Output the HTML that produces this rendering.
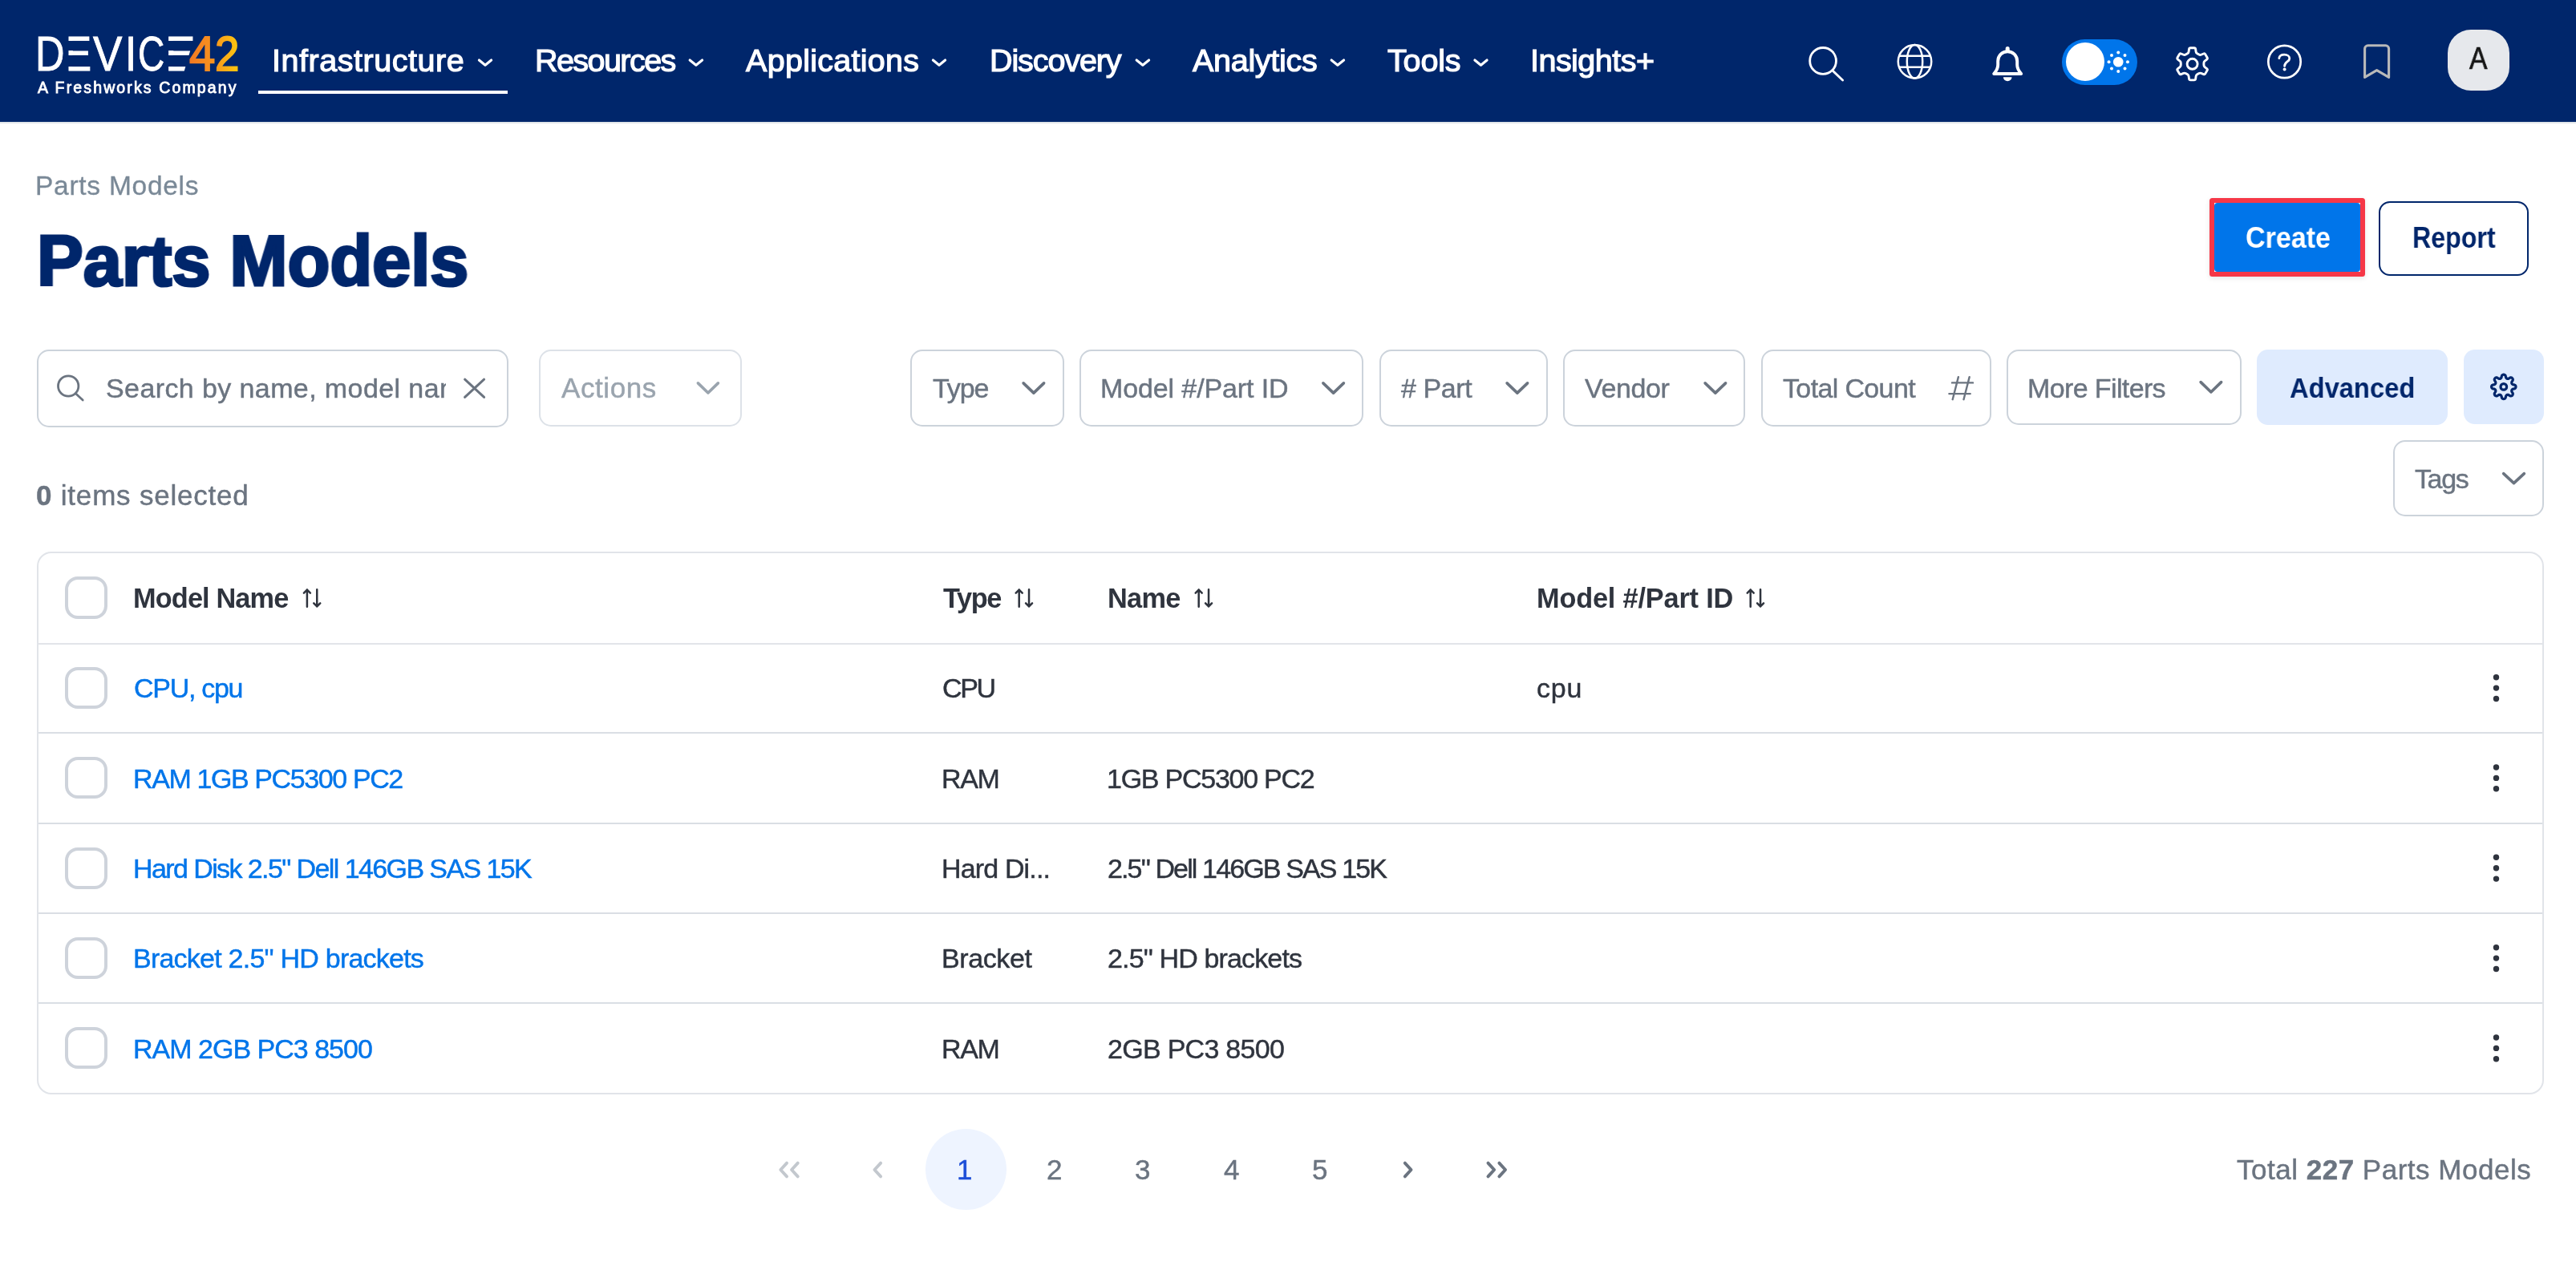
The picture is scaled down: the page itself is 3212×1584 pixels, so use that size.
<!DOCTYPE html>
<html lang="en"><head><meta charset="utf-8"><title>Parts Models</title>
<style>
*{margin:0;padding:0;box-sizing:border-box}
html,body{width:3212px;height:1584px;overflow:hidden;background:#fff}
body{font-family:"Liberation Sans", Arial, sans-serif;position:relative;-webkit-font-smoothing:antialiased}
.t{position:absolute;white-space:nowrap;display:block;will-change:transform}
.t b{font-weight:700}
.a{position:absolute}
.lg{display:inline-block;width:0;color:#fff;transform-origin:0 0;font-weight:400;-webkit-text-stroke:0.9px #fff}.lg.g{width:auto;position:relative;z-index:2;color:transparent;-webkit-background-clip:text;background-clip:text;-webkit-text-stroke:1.9px transparent}.lg.g4{background-image:linear-gradient(90deg,#f37a22 0%,#f37a22 5%,#f7931f 95%)}.lg.g2{background-image:linear-gradient(90deg,#f79a1c 8%,#fdc50f 90%)}</style></head>
<body>
<main>
<header class="site-header">
<div class="a" style="left:0px;top:0px;width:3212px;height:152px;background:#00266b;border-radius:0px;"></div>
<div class="a" style="left:0px;top:152px;width:3212px;height:2px;background:#e1e5ea;border-radius:0px;"></div>
<div class="a" style="left:322px;top:113px;width:311px;height:4px;background:#fff;border-radius:0px;"></div>
<div class="a" style="left:2571px;top:49px;width:93.75px;height:57px;background:#0075ea;border-radius:28.5px;"></div>
<div class="a" style="left:2576px;top:53px;width:48.2px;height:48.2px;background:#fff;border-radius:24.1px;"></div>
<div class="a" style="left:3052px;top:36.8px;width:77px;height:76px;background:#e6e8ec;border-radius:29px;"></div>
<svg class="a" style="left:0;top:0" width="3212" height="1584" viewBox="0 0 3212 1584" aria-hidden="true">
<path d="M597.39 74.99L605.00 81.26L612.61 74.99" fill="none" stroke="#fff" stroke-width="3.1" stroke-linecap="round" stroke-linejoin="round"/>
<path d="M860.14 74.99L867.88 81.26L875.61 74.99" fill="none" stroke="#fff" stroke-width="3.1" stroke-linecap="round" stroke-linejoin="round"/>
<path d="M1163.39 74.99L1171.00 81.26L1178.61 74.99" fill="none" stroke="#fff" stroke-width="3.1" stroke-linecap="round" stroke-linejoin="round"/>
<path d="M1417.14 74.99L1424.88 81.26L1432.61 74.99" fill="none" stroke="#fff" stroke-width="3.1" stroke-linecap="round" stroke-linejoin="round"/>
<path d="M1660.14 74.99L1667.88 81.26L1675.61 74.99" fill="none" stroke="#fff" stroke-width="3.1" stroke-linecap="round" stroke-linejoin="round"/>
<path d="M1838.89 74.99L1846.50 81.26L1854.11 74.99" fill="none" stroke="#fff" stroke-width="3.1" stroke-linecap="round" stroke-linejoin="round"/>
<circle cx="2273.1" cy="75.9" r="16.4" fill="none" stroke="#fff" stroke-width="2.8"/>
<path d="M2285 88.1L2297.6 100.1" stroke="#fff" stroke-width="2.8" stroke-linecap="round"/>
<g fill="none" stroke="#fff" stroke-width="2.5"><circle cx="2387.5" cy="76.75" r="20.75"/><ellipse cx="2387.5" cy="76.75" rx="9.7" ry="20.75"/><path d="M2367.9 69.85H2407.1M2367.9 83.65H2407.1"/></g>
<path d="M2486.2 92C2489.7 88 2491.2 85 2491.2 81V76.3C2491.2 69.5 2496.5 64.25 2503.2 64.25C2509.8999999999996 64.25 2515.2 69.5 2515.2 76.3V81C2515.2 85 2516.7 88 2520.2 92Z" fill="none" stroke="#fff" stroke-width="3.9" stroke-linejoin="round"/>
<path d="M2503.2 60.6V63" stroke="#fff" stroke-width="5" stroke-linecap="round"/>
<path d="M2497.9 96.3a5.3 5 0 0 0 10.6 0z" fill="#fff"/>
<circle cx="2641.25" cy="77.3" r="6.3" fill="#fff"/>
<circle cx="2652.95" cy="77.30" r="2" fill="#fff"/>
<circle cx="2649.52" cy="85.57" r="2" fill="#fff"/>
<circle cx="2641.25" cy="89.00" r="2" fill="#fff"/>
<circle cx="2632.98" cy="85.57" r="2" fill="#fff"/>
<circle cx="2629.55" cy="77.30" r="2" fill="#fff"/>
<circle cx="2632.98" cy="69.03" r="2" fill="#fff"/>
<circle cx="2641.25" cy="65.60" r="2" fill="#fff"/>
<circle cx="2649.52" cy="69.03" r="2" fill="#fff"/>
<path d="M2739.63 66.74Q2738.33 65.99 2738.12 64.50L2737.66 61.25Q2737.45 59.77 2735.95 59.77L2731.25 59.77Q2729.75 59.77 2729.54 61.25L2729.08 64.50Q2728.87 65.99 2727.57 66.74L2725.30 68.05Q2724.00 68.80 2722.61 68.24L2719.57 67.01Q2718.18 66.45 2717.43 67.75L2715.07 71.82Q2714.32 73.12 2715.51 74.04L2718.09 76.07Q2719.27 76.99 2719.27 78.49L2719.27 81.11Q2719.27 82.61 2718.09 83.53L2715.51 85.56Q2714.32 86.48 2715.07 87.78L2717.43 91.85Q2718.18 93.15 2719.57 92.59L2722.61 91.36Q2724.00 90.80 2725.30 91.55L2727.57 92.86Q2728.87 93.61 2729.08 95.10L2729.54 98.35Q2729.75 99.83 2731.25 99.83L2735.95 99.83Q2737.45 99.83 2737.66 98.35L2738.12 95.10Q2738.33 93.61 2739.63 92.86L2741.90 91.55Q2743.20 90.80 2744.59 91.36L2747.63 92.59Q2749.02 93.15 2749.77 91.85L2752.13 87.78Q2752.88 86.48 2751.69 85.56L2749.11 83.53Q2747.93 82.61 2747.93 81.11L2747.93 78.49Q2747.93 76.99 2749.11 76.07L2751.69 74.04Q2752.88 73.12 2752.13 71.82L2749.77 67.75Q2749.02 66.45 2747.63 67.01L2744.59 68.24Q2743.20 68.80 2741.90 68.05Z" fill="none" stroke="#fff" stroke-width="2.9" stroke-linejoin="round"/><circle cx="2733.60" cy="79.80" r="6.50" fill="none" stroke="#fff" stroke-width="2.9"/>
<circle cx="2848.5" cy="77" r="20.2" fill="none" stroke="#fff" stroke-width="2.7"/>
<path d="M2841.8 72.6C2842.2 69.6 2844.9 68.2 2848.3 68.2C2852.2 68.2 2854.8 70.2 2854.8 72.9C2854.8 76.9 2848.6 77.2 2848.6 82.4" fill="none" stroke="#fff" stroke-width="2.8" stroke-linecap="round" stroke-linejoin="round"/>
<circle cx="2848.6" cy="86.4" r="2.0" fill="#fff"/>
<path d="M2948.6 96.4V60.8a4 4 0 0 1 4-4h22a4 4 0 0 1 4 4V96.4L2963.6 87.6Z" fill="none" stroke="#b9b9b9" stroke-width="3.1" stroke-linejoin="round"/>
</svg>
<i class="a" style="z-index:1;left:83.5px;top:50.98px;width:7.5px;height:12.44px;background:#00266b"></i><i class="a" style="z-index:1;left:83.5px;top:68.9px;width:7.5px;height:14.12px;background:#00266b"></i><i class="a" style="z-index:1;left:208.5px;top:50.98px;width:9.5px;height:12.44px;background:#00266b"></i><i class="a" style="z-index:1;left:208.5px;top:68.9px;width:9.5px;height:14.12px;background:#00266b"></i><svg class="a" style="z-index:1;left:0;top:0" width="400" height="152" aria-hidden="true"><path d="M242.6 45L229.6 89H246V45Z" fill="#00266b"/></svg><div class="a" id="logo" aria-label="DEVICE42" style="left:0;top:0;padding-top:35.76px;font-size:61.7px;line-height:61.7px;white-space:nowrap"><span class="lg" style="margin-left:43.55px;transform:scaleX(0.8196)">D</span><span class="lg" style="margin-left:37.96px;transform:scaleX(0.7775)">E</span><span class="lg" style="margin-left:34.95px;transform:scaleX(0.8852)">V</span><span class="lg" style="margin-left:39.24px;transform:scaleX(0.8342)">I</span><span class="lg" style="margin-left:16.82px;transform:scaleX(0.7447)">C</span><span class="lg" style="margin-left:33.32px;transform:scaleX(0.9121)">E</span><span class="lg g g4" style="margin-left:30.63px;transform:scaleX(0.9424)">4</span><span class="lg g g2" style="margin-left:-2.43px;transform:scaleX(0.8858)">2</span></div>
<span class="t" id="nav0" style="left:339.46px;top:56.31px;font-size:39.5px;line-height:39.5px;font-weight:400;color:#fff;letter-spacing:0.538px;-webkit-text-stroke:1.2px #fff;">Infrastructure</span>
<span class="t" id="nav1" style="left:666.61px;top:56.31px;font-size:39.5px;line-height:39.5px;font-weight:400;color:#fff;letter-spacing:-1.564px;-webkit-text-stroke:1.2px #fff;">Resources</span>
<span class="t" id="nav2" style="left:930.40px;top:56.31px;font-size:39.5px;line-height:39.5px;font-weight:400;color:#fff;letter-spacing:0.282px;-webkit-text-stroke:1.2px #fff;">Applications</span>
<span class="t" id="nav3" style="left:1233.61px;top:56.31px;font-size:39.5px;line-height:39.5px;font-weight:400;color:#fff;letter-spacing:-1.096px;-webkit-text-stroke:1.2px #fff;">Discovery</span>
<span class="t" id="nav4" style="left:1487.40px;top:56.31px;font-size:39.5px;line-height:39.5px;font-weight:400;color:#fff;letter-spacing:-0.300px;-webkit-text-stroke:1.2px #fff;">Analytics</span>
<span class="t" id="nav5" style="left:1729.73px;top:56.31px;font-size:39.5px;line-height:39.5px;font-weight:400;color:#fff;letter-spacing:-0.150px;-webkit-text-stroke:1.2px #fff;">Tools</span>
<span class="t" id="nav6" style="left:1908.21px;top:56.31px;font-size:39.5px;line-height:39.5px;font-weight:400;color:#fff;letter-spacing:-0.524px;-webkit-text-stroke:1.2px #fff;">Insights+</span>
<span class="t" id="fw" style="left:47.47px;top:99.99px;font-size:19.5px;line-height:19.5px;font-weight:400;color:#fff;letter-spacing:2.135px;-webkit-text-stroke:0.8px #fff;">A Freshworks Company</span>
<span class="t" id="avatar" style="left:3078.95px;top:54.30px;font-size:38.5px;line-height:38.5px;font-weight:400;color:#161616;letter-spacing:0.000px;-webkit-text-stroke:0.7px #161616;transform-origin:0 0;transform:scaleX(0.8717);">A</span>
</header>
<section class="page-head">
<div class="a" style="left:2755px;top:247px;width:194px;height:98px;border:6px solid #f63747;border-radius:3.5px;background:#fff;box-shadow:0 2px 6px rgba(0,0,0,.10);"></div>
<div class="a" style="left:2761px;top:253px;width:182px;height:86px;background:#0075ea;border-radius:4px;"></div>
<div class="a" style="left:2966px;top:251px;width:187px;height:93px;border:2.4px solid #00266b;border-radius:14px;background:#fff;"></div>


<span class="t" id="crumb" style="left:44.49px;top:214.89px;font-size:33.5px;line-height:33.5px;font-weight:400;color:#7a8997;letter-spacing:0.732px;-webkit-text-stroke:0.3px #7a8997;">Parts Models</span>
<span class="t" id="title" style="left:46.26px;top:282.37px;font-size:88.5px;line-height:88.5px;font-weight:700;color:#00266b;letter-spacing:0.000px;-webkit-text-stroke:3.2px #00266b;transform-origin:0 0;transform:scaleX(0.9774);">Parts Models</span>
<span class="t" id="create" style="left:2799.56px;top:279.12px;font-size:36px;line-height:36px;font-weight:700;color:#fff;letter-spacing:0.000px;transform-origin:0 0;transform:scaleX(0.9461);">Create</span>
<span class="t" id="report" style="left:3007.84px;top:279.12px;font-size:36px;line-height:36px;font-weight:700;color:#00266b;letter-spacing:0.000px;transform-origin:0 0;transform:scaleX(0.8929);">Report</span>
</section>
<section class="toolbar">
<div class="a" style="left:46px;top:436px;width:588px;height:97px;border:2px solid #ccd3db;border-radius:15px;background:#fff;"></div>
<div class="a" style="left:672px;top:436px;width:253px;height:96px;border:2px solid #dde2e8;border-radius:15px;background:#fff;"></div>
<div class="a" style="left:1135px;top:436px;width:192px;height:96px;border:2px solid #ccd3db;border-radius:15px;background:#fff;"></div>
<div class="a" style="left:1346px;top:436px;width:354px;height:96px;border:2px solid #ccd3db;border-radius:15px;background:#fff;"></div>
<div class="a" style="left:1720px;top:436px;width:210px;height:96px;border:2px solid #ccd3db;border-radius:15px;background:#fff;"></div>
<div class="a" style="left:1949px;top:436px;width:227px;height:96px;border:2px solid #ccd3db;border-radius:15px;background:#fff;"></div>
<div class="a" style="left:2196px;top:436px;width:287px;height:96px;border:2px solid #ccd3db;border-radius:15px;background:#fff;"></div>
<div class="a" style="left:2502px;top:436px;width:293px;height:94px;border:2px solid #ccd3db;border-radius:15px;background:#fff;"></div>
<div class="a" style="left:2814px;top:436px;width:238px;height:94px;background:#dfebfe;border-radius:14px;"></div>
<div class="a" style="left:3072px;top:436px;width:100px;height:93px;background:#dfebfe;border-radius:14px;"></div>
<div class="a" style="left:2984px;top:549px;width:188px;height:95px;border:2px solid #ccd3db;border-radius:15px;background:#fff;"></div>
<svg class="a" style="left:0;top:0" width="3212" height="1584" viewBox="0 0 3212 1584" aria-hidden="true">
<circle cx="85.2" cy="481.5" r="12.7" fill="none" stroke="#6b7480" stroke-width="2.8"/>
<path d="M94.6 491L103.2 499" stroke="#6b7480" stroke-width="2.8" stroke-linecap="round"/>
<path d="M579.6 473.2L603.6 495.4M603.6 473.2L579.6 495.4" stroke="#6b7480" stroke-width="3" stroke-linecap="round"/>
<path d="M870.37 477.87L882.88 489.95L895.38 477.87" fill="none" stroke="#9aa4ae" stroke-width="3.6" stroke-linecap="round" stroke-linejoin="round"/>
<path d="M1276.12 477.87L1288.88 490.15L1301.63 477.87" fill="none" stroke="#6b7480" stroke-width="3.6" stroke-linecap="round" stroke-linejoin="round"/>
<path d="M1649.87 477.87L1662.62 490.15L1675.38 477.87" fill="none" stroke="#6b7480" stroke-width="3.6" stroke-linecap="round" stroke-linejoin="round"/>
<path d="M1879.12 477.87L1891.88 490.15L1904.63 477.87" fill="none" stroke="#6b7480" stroke-width="3.6" stroke-linecap="round" stroke-linejoin="round"/>
<path d="M2126.12 477.87L2138.88 490.15L2151.63 477.87" fill="none" stroke="#6b7480" stroke-width="3.6" stroke-linecap="round" stroke-linejoin="round"/>
<path d="M2744.12 476.62L2756.88 488.95L2769.63 476.62" fill="none" stroke="#6b7480" stroke-width="3.6" stroke-linecap="round" stroke-linejoin="round"/>
<path d="M2441.9 470.1L2434.7 498.2M2455.7 470.1L2448.5 498.2M2434 477.4H2460M2430.4 491.1H2456.7" fill="none" stroke="#6b7480" stroke-width="2.4" stroke-linecap="round"/>
<path d="M3121.80 467.20L3122.39 467.27L3122.97 467.48L3123.52 467.84L3124.02 468.39L3124.35 469.58L3124.59 470.77L3124.92 471.35L3125.25 471.77L3125.61 472.08L3125.99 472.29L3126.41 472.41L3126.87 472.44L3127.41 472.38L3128.05 472.21L3129.06 471.53L3130.14 470.92L3130.88 470.89L3131.52 471.02L3132.08 471.28L3132.55 471.65L3132.92 472.12L3133.18 472.68L3133.31 473.32L3133.28 474.06L3132.67 475.14L3131.99 476.15L3131.82 476.79L3131.76 477.33L3131.79 477.79L3131.91 478.21L3132.12 478.59L3132.43 478.95L3132.85 479.28L3133.43 479.61L3134.62 479.85L3135.81 480.18L3136.36 480.68L3136.72 481.23L3136.93 481.81L3137.00 482.40L3136.93 482.99L3136.72 483.57L3136.36 484.12L3135.81 484.62L3134.62 484.95L3133.43 485.19L3132.85 485.52L3132.43 485.85L3132.12 486.21L3131.91 486.59L3131.79 487.01L3131.76 487.47L3131.82 488.01L3131.99 488.65L3132.67 489.66L3133.28 490.74L3133.31 491.48L3133.18 492.12L3132.92 492.68L3132.55 493.15L3132.08 493.52L3131.52 493.78L3130.88 493.91L3130.14 493.88L3129.06 493.27L3128.05 492.59L3127.41 492.42L3126.87 492.36L3126.41 492.39L3125.99 492.51L3125.61 492.72L3125.25 493.03L3124.92 493.45L3124.59 494.03L3124.35 495.22L3124.02 496.41L3123.52 496.96L3122.97 497.32L3122.39 497.53L3121.80 497.60L3121.21 497.53L3120.63 497.32L3120.08 496.96L3119.58 496.41L3119.25 495.22L3119.01 494.03L3118.68 493.45L3118.35 493.03L3117.99 492.72L3117.61 492.51L3117.19 492.39L3116.73 492.36L3116.19 492.42L3115.55 492.59L3114.54 493.27L3113.46 493.88L3112.72 493.91L3112.08 493.78L3111.52 493.52L3111.05 493.15L3110.68 492.68L3110.42 492.12L3110.29 491.48L3110.32 490.74L3110.93 489.66L3111.61 488.65L3111.78 488.01L3111.84 487.47L3111.81 487.01L3111.69 486.59L3111.48 486.21L3111.17 485.85L3110.75 485.52L3110.17 485.19L3108.98 484.95L3107.79 484.62L3107.24 484.12L3106.88 483.57L3106.67 482.99L3106.60 482.40L3106.67 481.81L3106.88 481.23L3107.24 480.68L3107.79 480.18L3108.98 479.85L3110.17 479.61L3110.75 479.28L3111.17 478.95L3111.48 478.59L3111.69 478.21L3111.81 477.79L3111.84 477.33L3111.78 476.79L3111.61 476.15L3110.93 475.14L3110.32 474.06L3110.29 473.32L3110.42 472.68L3110.68 472.12L3111.05 471.65L3111.52 471.28L3112.08 471.02L3112.72 470.89L3113.46 470.92L3114.54 471.53L3115.55 472.21L3116.19 472.38L3116.73 472.44L3117.19 472.41L3117.61 472.29L3117.99 472.08L3118.35 471.77L3118.68 471.35L3119.01 470.77L3119.25 469.58L3119.58 468.39L3120.08 467.84L3120.63 467.48L3121.21 467.27L3121.80 467.20Z" fill="none" stroke="#00266b" stroke-width="3.2" stroke-linejoin="round"/><circle cx="3121.80" cy="482.40" r="3.80" fill="none" stroke="#00266b" stroke-width="3.2"/>
<path d="M3121.62 590.62L3134.50 602.65L3147.38 590.62" fill="none" stroke="#6b7480" stroke-width="3.6" stroke-linecap="round" stroke-linejoin="round"/>
</svg>

<span class="t" id="search" style="left:131.63px;top:467.46px;font-size:34px;line-height:34px;font-weight:400;color:#6b7480;letter-spacing:0.400px;-webkit-text-stroke:0.45px #6b7480;overflow:hidden;height:44.2px;width:423.87px;">Search by name, model name</span>
<span class="t" id="actions" style="left:699.87px;top:466.12px;font-size:35px;line-height:35px;font-weight:400;color:#9aa4ae;letter-spacing:0.575px;-webkit-text-stroke:0.45px #9aa4ae;">Actions</span>
<span class="t" id="ftype" style="left:1162.57px;top:466.71px;font-size:34px;line-height:34px;font-weight:400;color:#6b7480;letter-spacing:-1.065px;-webkit-text-stroke:0.45px #6b7480;">Type</span>
<span class="t" id="fmodel" style="left:1371.79px;top:466.71px;font-size:34px;line-height:34px;font-weight:400;color:#6b7480;letter-spacing:-0.113px;-webkit-text-stroke:0.45px #6b7480;">Model #/Part ID</span>
<span class="t" id="fpart" style="left:1746.91px;top:466.71px;font-size:34px;line-height:34px;font-weight:400;color:#6b7480;letter-spacing:-0.420px;-webkit-text-stroke:0.45px #6b7480;"># Part</span>
<span class="t" id="fvendor" style="left:1976.09px;top:466.71px;font-size:34px;line-height:34px;font-weight:400;color:#6b7480;letter-spacing:-0.385px;-webkit-text-stroke:0.45px #6b7480;">Vendor</span>
<span class="t" id="ftotal" style="left:2222.57px;top:466.71px;font-size:34px;line-height:34px;font-weight:400;color:#6b7480;letter-spacing:-0.640px;-webkit-text-stroke:0.45px #6b7480;">Total Count</span>
<span class="t" id="fmore" style="left:2528.29px;top:466.71px;font-size:34px;line-height:34px;font-weight:400;color:#6b7480;letter-spacing:-0.622px;-webkit-text-stroke:0.45px #6b7480;">More Filters</span>
<span class="t" id="adv" style="left:2855.49px;top:465.57px;font-size:35px;line-height:35px;font-weight:700;color:#00266b;letter-spacing:0.000px;transform-origin:0 0;transform:scaleX(0.9340);">Advanced</span>
<span class="t" id="tags" style="left:3011.07px;top:580.21px;font-size:34px;line-height:34px;font-weight:400;color:#6b7480;letter-spacing:-1.388px;-webkit-text-stroke:0.45px #6b7480;">Tags</span>
<span class="t" id="sel" style="left:45.26px;top:600.37px;font-size:35px;line-height:35px;font-weight:400;color:#6b7480;letter-spacing:0.793px;-webkit-text-stroke:0.45px #6b7480;"><b>0</b> items selected</span>
</section>
<section class="data-table">
<div class="a" style="left:46px;top:688px;width:3126px;height:677px;border:2px solid #e1e4e9;border-radius:18px;background:#fff;"></div>
<div class="a" style="left:48px;top:802px;width:3122px;height:2px;background:#e2e4e9;border-radius:0px;"></div>
<div class="a" style="left:48px;top:913px;width:3122px;height:2px;background:#dadee4;border-radius:0px;"></div>
<div class="a" style="left:48px;top:1026px;width:3122px;height:2px;background:#dadee4;border-radius:0px;"></div>
<div class="a" style="left:48px;top:1138px;width:3122px;height:2px;background:#dadee4;border-radius:0px;"></div>
<div class="a" style="left:48px;top:1250px;width:3122px;height:2px;background:#dadee4;border-radius:0px;"></div>
<div class="a" style="left:81px;top:719px;width:53px;height:53px;border:4px solid #ced3db;border-radius:16px;background:#fff;"></div>
<div class="a" style="left:81px;top:832px;width:53px;height:52px;border:4px solid #ced3db;border-radius:16px;background:#fff;"></div>
<div class="a" style="left:81px;top:944px;width:53px;height:52px;border:4px solid #ced3db;border-radius:16px;background:#fff;"></div>
<div class="a" style="left:81px;top:1057px;width:53px;height:52px;border:4px solid #ced3db;border-radius:16px;background:#fff;"></div>
<div class="a" style="left:81px;top:1169px;width:53px;height:52px;border:4px solid #ced3db;border-radius:16px;background:#fff;"></div>
<div class="a" style="left:81px;top:1281px;width:53px;height:52px;border:4px solid #ced3db;border-radius:16px;background:#fff;"></div>
<svg class="a" style="left:0;top:0" width="3212" height="1584" viewBox="0 0 3212 1584" aria-hidden="true">
<path d="M382.90 756.70V735.50M378.90 739.60L382.90 735.50L386.90 739.60" fill="none" stroke="#2f343e" stroke-width="2.5" stroke-linecap="round" stroke-linejoin="round"/><path d="M395.25 735.20V756.40M391.25 752.30L395.25 756.40L399.25 752.30" fill="none" stroke="#2f343e" stroke-width="2.5" stroke-linecap="round" stroke-linejoin="round"/>
<path d="M1270.70 756.70V735.50M1266.70 739.60L1270.70 735.50L1274.70 739.60" fill="none" stroke="#2f343e" stroke-width="2.5" stroke-linecap="round" stroke-linejoin="round"/><path d="M1283.05 735.20V756.40M1279.05 752.30L1283.05 756.40L1287.05 752.30" fill="none" stroke="#2f343e" stroke-width="2.5" stroke-linecap="round" stroke-linejoin="round"/>
<path d="M1494.70 756.70V735.50M1490.70 739.60L1494.70 735.50L1498.70 739.60" fill="none" stroke="#2f343e" stroke-width="2.5" stroke-linecap="round" stroke-linejoin="round"/><path d="M1507.05 735.20V756.40M1503.05 752.30L1507.05 756.40L1511.05 752.30" fill="none" stroke="#2f343e" stroke-width="2.5" stroke-linecap="round" stroke-linejoin="round"/>
<path d="M2182.70 756.70V735.50M2178.70 739.60L2182.70 735.50L2186.70 739.60" fill="none" stroke="#2f343e" stroke-width="2.5" stroke-linecap="round" stroke-linejoin="round"/><path d="M2195.05 735.20V756.40M2191.05 752.30L2195.05 756.40L2199.05 752.30" fill="none" stroke="#2f343e" stroke-width="2.5" stroke-linecap="round" stroke-linejoin="round"/>
<circle cx="3112.5" cy="844.70" r="3.7" fill="#2f343e"/>
<circle cx="3112.5" cy="858.10" r="3.7" fill="#2f343e"/>
<circle cx="3112.5" cy="871.50" r="3.7" fill="#2f343e"/>
<circle cx="3112.5" cy="957.00" r="3.7" fill="#2f343e"/>
<circle cx="3112.5" cy="970.40" r="3.7" fill="#2f343e"/>
<circle cx="3112.5" cy="983.80" r="3.7" fill="#2f343e"/>
<circle cx="3112.5" cy="1069.30" r="3.7" fill="#2f343e"/>
<circle cx="3112.5" cy="1082.70" r="3.7" fill="#2f343e"/>
<circle cx="3112.5" cy="1096.10" r="3.7" fill="#2f343e"/>
<circle cx="3112.5" cy="1181.70" r="3.7" fill="#2f343e"/>
<circle cx="3112.5" cy="1195.10" r="3.7" fill="#2f343e"/>
<circle cx="3112.5" cy="1208.50" r="3.7" fill="#2f343e"/>
<circle cx="3112.5" cy="1294.00" r="3.7" fill="#2f343e"/>
<circle cx="3112.5" cy="1307.40" r="3.7" fill="#2f343e"/>
<circle cx="3112.5" cy="1320.80" r="3.7" fill="#2f343e"/>
</svg>

<span class="t" id="h0" style="left:166.44px;top:728.96px;font-size:34.3px;line-height:34.3px;font-weight:700;color:#2f343e;letter-spacing:-0.864px;">Model Name</span>
<span class="t" id="h1" style="left:1175.85px;top:728.96px;font-size:34.3px;line-height:34.3px;font-weight:700;color:#2f343e;letter-spacing:-1.401px;">Type</span>
<span class="t" id="h2" style="left:1381.44px;top:728.96px;font-size:34.3px;line-height:34.3px;font-weight:700;color:#2f343e;letter-spacing:-0.729px;">Name</span>
<span class="t" id="h3" style="left:1915.69px;top:728.96px;font-size:34.3px;line-height:34.3px;font-weight:700;color:#2f343e;letter-spacing:-0.177px;">Model #/Part ID</span>
<span class="t" id="r0a" style="left:166.88px;top:841.21px;font-size:34px;line-height:34px;font-weight:400;color:#0075ea;letter-spacing:-1.288px;-webkit-text-stroke:0.45px #0075ea;">CPU, cpu</span>
<span class="t" id="r0b" style="left:1174.78px;top:841.21px;font-size:34px;line-height:34px;font-weight:400;color:#2f343e;letter-spacing:-2.399px;-webkit-text-stroke:0.45px #2f343e;">CPU</span>
<span class="t" id="r0d" style="left:1916.22px;top:841.21px;font-size:34px;line-height:34px;font-weight:400;color:#2f343e;letter-spacing:0.739px;-webkit-text-stroke:0.45px #2f343e;">cpu</span>
<span class="t" id="r1a" style="left:165.84px;top:953.51px;font-size:34px;line-height:34px;font-weight:400;color:#0075ea;letter-spacing:-1.393px;-webkit-text-stroke:0.45px #0075ea;">RAM 1GB PC5300 PC2</span>
<span class="t" id="r1b" style="left:1173.74px;top:953.51px;font-size:34px;line-height:34px;font-weight:400;color:#2f343e;letter-spacing:-1.320px;-webkit-text-stroke:0.45px #2f343e;">RAM</span>
<span class="t" id="r1c" style="left:1380.49px;top:953.51px;font-size:34px;line-height:34px;font-weight:400;color:#2f343e;letter-spacing:-1.248px;-webkit-text-stroke:0.45px #2f343e;">1GB PC5300 PC2</span>
<span class="t" id="r2a" style="left:165.84px;top:1065.81px;font-size:34px;line-height:34px;font-weight:400;color:#0075ea;letter-spacing:-1.593px;-webkit-text-stroke:0.45px #0075ea;">Hard Disk 2.5&quot; Dell 146GB SAS 15K</span>
<span class="t" id="r2b" style="left:1173.74px;top:1065.81px;font-size:34px;line-height:34px;font-weight:400;color:#2f343e;letter-spacing:-0.849px;-webkit-text-stroke:0.45px #2f343e;">Hard Di...</span>
<span class="t" id="r2c" style="left:1381.42px;top:1065.81px;font-size:34px;line-height:34px;font-weight:400;color:#2f343e;letter-spacing:-1.871px;-webkit-text-stroke:0.45px #2f343e;">2.5&quot; Dell 146GB SAS 15K</span>
<span class="t" id="r3a" style="left:165.84px;top:1178.21px;font-size:34px;line-height:34px;font-weight:400;color:#0075ea;letter-spacing:-0.769px;-webkit-text-stroke:0.45px #0075ea;">Bracket 2.5&quot; HD brackets</span>
<span class="t" id="r3b" style="left:1173.74px;top:1178.21px;font-size:34px;line-height:34px;font-weight:400;color:#2f343e;letter-spacing:-0.400px;-webkit-text-stroke:0.45px #2f343e;">Bracket</span>
<span class="t" id="r3c" style="left:1381.42px;top:1178.21px;font-size:34px;line-height:34px;font-weight:400;color:#2f343e;letter-spacing:-0.854px;-webkit-text-stroke:0.45px #2f343e;">2.5&quot; HD brackets</span>
<span class="t" id="r4a" style="left:165.84px;top:1290.51px;font-size:34px;line-height:34px;font-weight:400;color:#0075ea;letter-spacing:-0.990px;-webkit-text-stroke:0.45px #0075ea;">RAM 2GB PC3 8500</span>
<span class="t" id="r4b" style="left:1173.74px;top:1290.51px;font-size:34px;line-height:34px;font-weight:400;color:#2f343e;letter-spacing:-1.320px;-webkit-text-stroke:0.45px #2f343e;">RAM</span>
<span class="t" id="r4c" style="left:1381.42px;top:1290.51px;font-size:34px;line-height:34px;font-weight:400;color:#2f343e;letter-spacing:-0.712px;-webkit-text-stroke:0.45px #2f343e;">2GB PC3 8500</span>
</section>
<nav class="pagination">
<div class="a" style="left:1153.75px;top:1408px;width:101.25px;height:101.25px;background:#eef4ff;border-radius:51px;"></div>
<svg class="a" style="left:0;top:0" width="3212" height="1584" viewBox="0 0 3212 1584" aria-hidden="true">
<path d="M981.04 1450.66L973.34 1459.00L981.04 1467.34" fill="none" stroke="#c3c8ce" stroke-width="3.9" stroke-linecap="round" stroke-linejoin="round"/>
<path d="M994.75 1450.66L987.04 1459.00L994.75 1467.34" fill="none" stroke="#c3c8ce" stroke-width="3.9" stroke-linecap="round" stroke-linejoin="round"/>
<path d="M1098.14 1450.66L1090.44 1459.00L1098.14 1467.34" fill="none" stroke="#c3c8ce" stroke-width="3.9" stroke-linecap="round" stroke-linejoin="round"/>
<path d="M1751.81 1450.66L1759.51 1459.00L1751.81 1467.34" fill="none" stroke="#6b7480" stroke-width="3.9" stroke-linecap="round" stroke-linejoin="round"/>
<path d="M1855.46 1450.66L1863.16 1459.00L1855.46 1467.34" fill="none" stroke="#6b7480" stroke-width="3.9" stroke-linecap="round" stroke-linejoin="round"/>
<path d="M1869.36 1450.66L1877.06 1459.00L1869.36 1467.34" fill="none" stroke="#6b7480" stroke-width="3.9" stroke-linecap="round" stroke-linejoin="round"/>
</svg>

<span class="t" id="p0" style="left:1193.00px;top:1440.87px;font-size:35px;line-height:35px;font-weight:400;color:#1d4fd8;letter-spacing:0.000px;-webkit-text-stroke:0.45px #1d4fd8;">1</span>
<span class="t" id="p1" style="left:1304.98px;top:1440.87px;font-size:35px;line-height:35px;font-weight:400;color:#6b7480;letter-spacing:0.000px;-webkit-text-stroke:0.45px #6b7480;">2</span>
<span class="t" id="p2" style="left:1415.15px;top:1440.87px;font-size:35px;line-height:35px;font-weight:400;color:#6b7480;letter-spacing:0.000px;-webkit-text-stroke:0.45px #6b7480;">3</span>
<span class="t" id="p3" style="left:1526.04px;top:1440.87px;font-size:35px;line-height:35px;font-weight:400;color:#6b7480;letter-spacing:0.000px;-webkit-text-stroke:0.45px #6b7480;">4</span>
<span class="t" id="p4" style="left:1636.14px;top:1440.87px;font-size:35px;line-height:35px;font-weight:400;color:#6b7480;letter-spacing:0.000px;-webkit-text-stroke:0.45px #6b7480;">5</span>
<span class="t" id="total" style="left:2788.81px;top:1440.87px;font-size:35px;line-height:35px;font-weight:400;color:#6b7480;letter-spacing:0.506px;-webkit-text-stroke:0.45px #6b7480;">Total <b>227</b> Parts Models</span>
</nav>
</main>
</body></html>
